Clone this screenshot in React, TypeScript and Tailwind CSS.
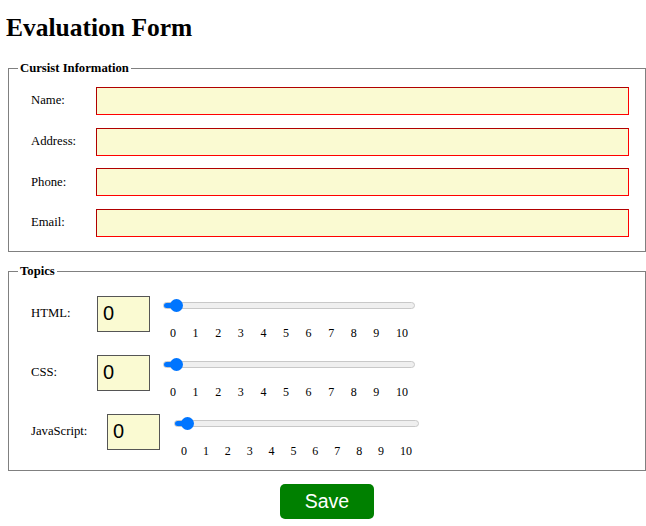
const ticks = ['0', '1', '2', '3', '4', '5', '6', '7', '8', '9', '10']

interface ITopicRow {
  label: string
  labelWidth: string
  sliderGap: string
  sliderWidth: string
}

const topics: ITopicRow[] = [
  { label: 'HTML:', labelWidth: 'w-[66px]', sliderGap: 'ml-[13px]', sliderWidth: 'w-[252px]' },
  { label: 'CSS:', labelWidth: 'w-[66px]', sliderGap: 'ml-[13px]', sliderWidth: 'w-[252px]' },
  { label: 'JavaScript:', labelWidth: 'w-[76px]', sliderGap: 'ml-[14px]', sliderWidth: 'w-[245px]' },
]

const cursistFields = ['Name:', 'Address:', 'Phone:', 'Email:']

// Chrome-like range slider at value 0
const Slider = () => (
  <div className="relative h-[16px] flex items-center">
    <div className="h-[7px] w-full rounded-full bg-[#efefef] border border-[#c8c8c8] overflow-hidden">
      <div className="h-full w-[13px] bg-[#0075ff]" />
    </div>
    <div className="absolute left-[6.5px] top-[1.5px] w-[13px] h-[13px] rounded-full bg-[#0075ff]" />
  </div>
)

const TopicRow = ({ label, labelWidth, sliderGap, sliderWidth }: ITopicRow) => (
  <div className="flex items-start">
    <label className={`ml-[13px] h-[36px] flex items-center ${labelWidth}`}>
      {label}
    </label>
    <input
      type="text"
      defaultValue="0"
      className="w-[53px] h-[36px] border border-[#555] bg-[#fafad2] pl-[5px] font-['Liberation_Sans',Arial,sans-serif] text-[20px] text-black outline-none"
    />
    <div className={`flex flex-col pt-[2px] ${sliderGap} ${sliderWidth}`}>
      <Slider />
      <div className="mt-[12px] flex justify-between px-[7px] text-[12px] leading-[14px]">
        {ticks.map((t) => (
          <span key={t}>{t}</span>
        ))}
      </div>
    </div>
  </div>
)

export default function App() {
  return (
    <div className="min-h-[526px] bg-white text-black font-['Liberation_Serif','Times_New_Roman',serif] text-[12.7px]">
      <h1 className="pl-[6px] pt-[13px] text-[25.5px] font-bold leading-[30px]">
        Evaluation Form
      </h1>

      <fieldset className="ml-[8px] mt-[17.5px] w-[638px] border border-[#808080] px-[9px] pt-[11.5px] pb-[14px]">
        <legend className="px-[2px] font-bold leading-[15px]">Cursist Information</legend>
        <div className="flex flex-col gap-[12.67px]">
          {cursistFields.map((f) => (
            <div key={f} className="flex items-center">
              <label className="ml-[13px] w-[65px]">{f}</label>
              <input
                type="text"
                className="w-[533px] h-[28px] border border-t-[#b00000] border-l-[#b00000] border-b-[#ff0000] border-r-[#ff0000] bg-[#fafad2] outline-none"
              />
            </div>
          ))}
        </div>
      </fieldset>

      <fieldset className="ml-[8px] mt-[12.5px] w-[638px] border border-[#808080] px-[9px] pt-[16.5px] pb-[12px]">
        <legend className="px-[2px] font-bold leading-[15px]">Topics</legend>
        <div className="flex flex-col gap-[15px]">
          {topics.map((t) => (
            <TopicRow key={t.label} {...t} />
          ))}
        </div>
      </fieldset>

      <div className="ml-[8px] mt-[13px] w-[638px] flex justify-center">
        <button
          type="button"
          className="w-[94px] h-[35px] rounded-[5px] bg-[#008000] text-white font-['Liberation_Sans',Arial,sans-serif] text-[19.5px]"
        >
          Save
        </button>
      </div>
    </div>
  )
}
